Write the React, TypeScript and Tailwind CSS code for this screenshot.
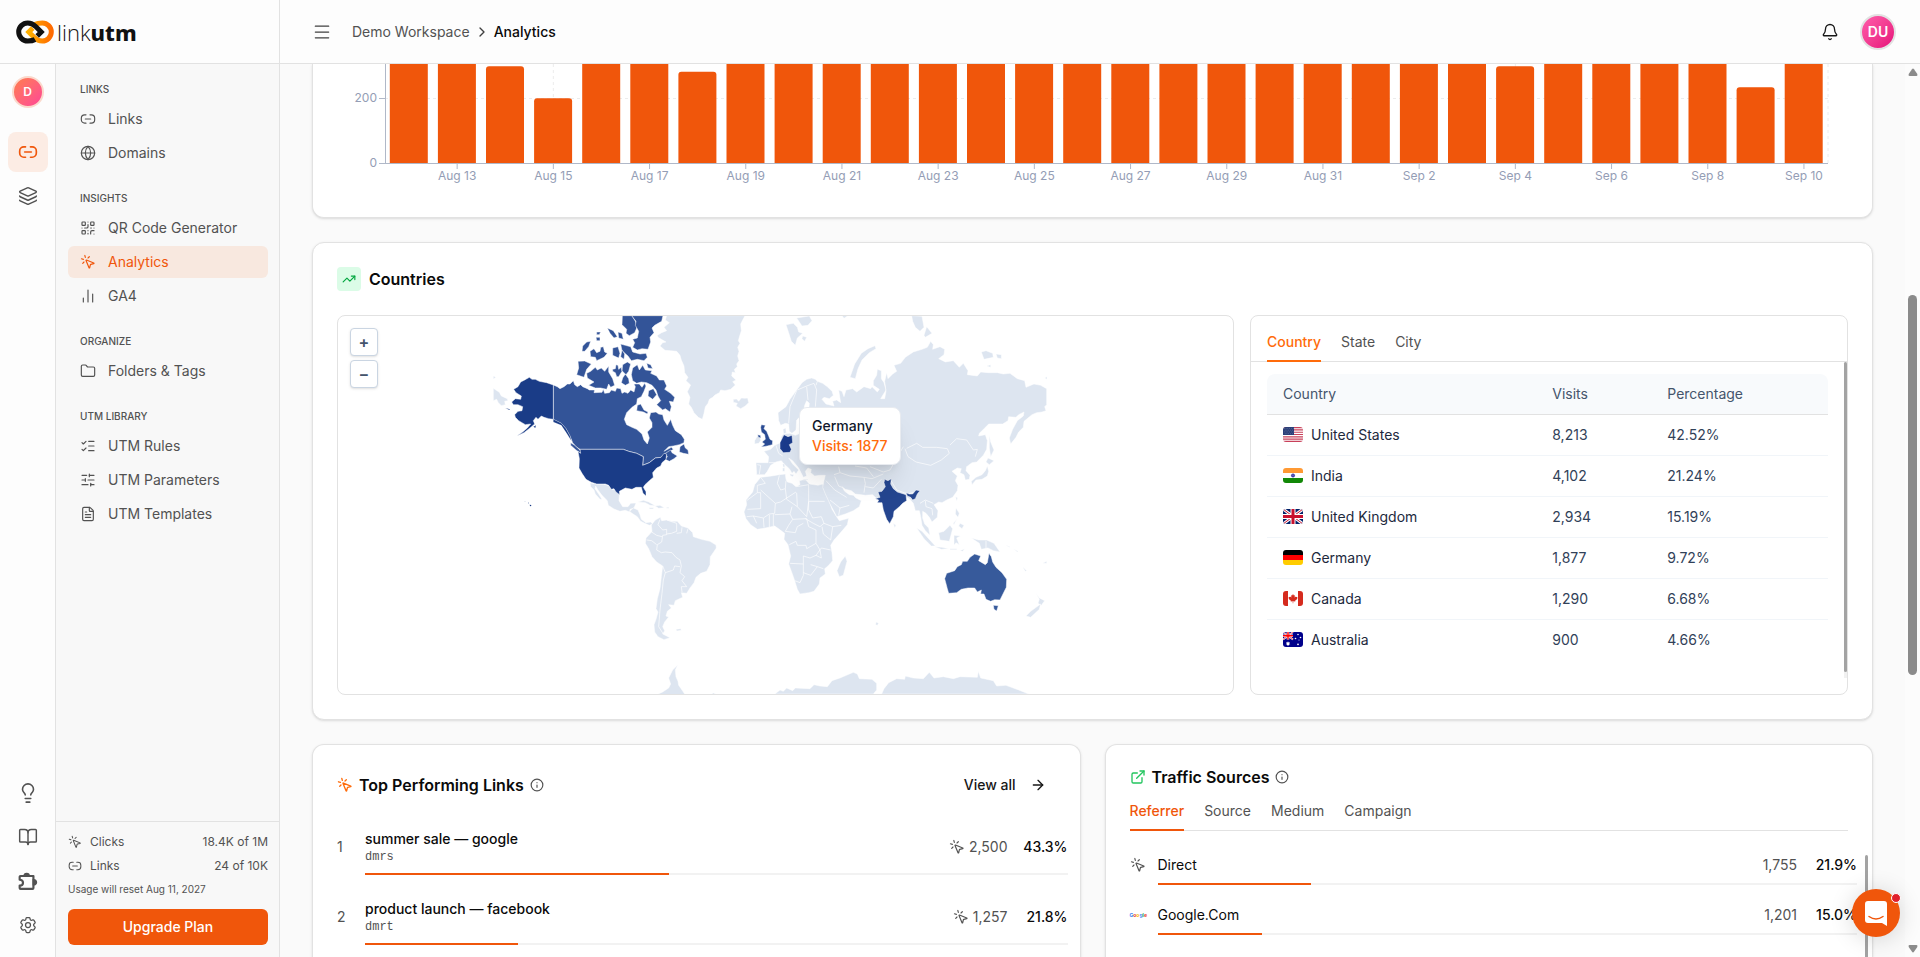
import type { ReactNode } from "react";
import {
  ArrowRight,
  Bell,
  BookOpen,
  ChartNoAxesColumn,
  ChevronRight,
  ExternalLink,
  FileText,
  Folder,
  Globe,
  Info,
  Layers,
  Lightbulb,
  ListChecks,
  Menu,
  MousePointerClick,
  QrCode,
  SlidersHorizontal,
  TrendingUp,
} from "lucide-react";
import { HiOutlineCog6Tooth } from "react-icons/hi2";

interface IconProps {
  className?: string;
  strokeWidth?: number;
}

function ChainIcon({ className, strokeWidth = 2 }: IconProps) {
  return (
    <svg
      viewBox="0 0 24 24"
      className={className}
      fill="none"
      stroke="currentColor"
      strokeWidth={strokeWidth}
      strokeLinecap="round"
      strokeLinejoin="round"
      aria-hidden="true"
    >
      <path d="M9 5.75H7a5 5 0 0 0-5 5v2.5a5 5 0 0 0 5 5h2M15 5.75h2a5 5 0 0 1 5 5v2.5a5 5 0 0 1-5 5h-2M8 12h8" />
    </svg>
  );
}

function PuzzleIcon({ className }: IconProps) {
  return (
    <svg viewBox="0 0 24 24" className={className} aria-hidden="true">
      <path
        d="M3 6h15.500v14.500a1 1 0 0 1-1 1H3a1 1 0 0 1-1-1V17.500c2.500 0 4-1.300 4-3.500s-1.500-3.500-4-3.500V7a1 1 0 0 1 1-1Z"
        fill="none"
        stroke="currentColor"
        strokeWidth="2.600"
        strokeLinejoin="round"
      />
      <path
        d="M6.500 6a3.900 3.900 0 0 1 7.800 0v1h-7.800ZM18.500 9.500a4 4 0 0 1 4.500 4 4 4 0 0 1-4.500 4h-1v-8Z"
        fill="currentColor"
      />
    </svg>
  );
}

function Logo() {
  return (
    <a href="#home" className="flex items-center gap-[3px]" aria-label="linkutm home">
      <svg viewBox="0 0 38 24" className="h-6 w-[38px]" fill="none" strokeWidth="5" aria-hidden="true">
        <defs>
          <linearGradient id="logo-ring" x1="0" x2="1" y1="0" y2="0">
            <stop offset="0" stopColor="#ffb000" />
            <stop offset="1" stopColor="#ff6b00" />
          </linearGradient>
        </defs>
        <path
          d="M19 4.500C21.500 3 23.500 3 26.300 3a9 9 0 0 1 0 18c-4 0-5.500-1-8-3.500L12.800 12l4-4"
          stroke="url(#logo-ring)"
        />
        <path
          d="M19 19.500C16.500 21 14.500 21 11.700 21a9 9 0 0 1 0-18c4 0 5.500 1 8 3.500l5.500 5.500-4 4"
          stroke="#111"
        />
      </svg>
      <span className="font-['Open_Sans','Noto_Sans',sans-serif] text-[22px] leading-6 text-[#111]">
        <span className="font-light">link</span>
        <span className="font-['Noto_Sans',sans-serif] font-extrabold">utm</span>
      </span>
    </a>
  );
}

const navGroups = [
  {
    label: "LINKS",
    items: [
      { name: "Links", Icon: ChainIcon },
      { name: "Domains", Icon: Globe },
    ],
  },
  {
    label: "INSIGHTS",
    items: [
      { name: "QR Code Generator", Icon: QrCode },
      { name: "Analytics", Icon: MousePointerClick, active: true },
      { name: "GA4", Icon: ChartNoAxesColumn },
    ],
  },
  { label: "ORGANIZE", items: [{ name: "Folders & Tags", Icon: Folder }] },
  {
    label: "UTM LIBRARY",
    items: [
      { name: "UTM Rules", Icon: ListChecks },
      { name: "UTM Parameters", Icon: SlidersHorizontal },
      { name: "UTM Templates", Icon: FileText },
    ],
  },
];

function RailButton({ label, active, children }: { label: string; active?: boolean; children: ReactNode }) {
  return (
    <button
      type="button"
      aria-label={label}
      className={
        active
          ? "flex size-10 items-center justify-center rounded-lg bg-[#fcece4] text-[#f0560b]"
          : "flex size-10 items-center justify-center rounded-lg text-[#525252]"
      }
    >
      {children}
    </button>
  );
}

function Rail() {
  return (
    <div className="flex w-14 shrink-0 flex-col items-center border-r border-[#e2e2e2] bg-[#fdfdfd] py-3">
      <button
        type="button"
        aria-label="Workspace"
        className="mb-6 flex size-8 items-center justify-center rounded-full border-2 border-[#fbd9cc] bg-linear-to-br from-[#ff8040] to-[#ff3d9a] bg-origin-border text-xs font-semibold text-white"
      >
        D
      </button>
      <div className="flex flex-col gap-1">
        <RailButton label="Links" active>
          <ChainIcon className="size-5" />
        </RailButton>
        <RailButton label="Collections">
          <Layers className="size-5" strokeWidth={1.75} />
        </RailButton>
      </div>
      <div className="mt-auto flex flex-col gap-1">
        <RailButton label="Tips">
          <Lightbulb className="size-[22px]" strokeWidth={1.75} />
        </RailButton>
        <RailButton label="Docs">
          <BookOpen className="size-5" strokeWidth={1.75} />
        </RailButton>
        <RailButton label="Integrations">
          <PuzzleIcon className="size-5" />
        </RailButton>
        <RailButton label="Settings">
          <HiOutlineCog6Tooth className="size-5" />
        </RailButton>
      </div>
    </div>
  );
}

function Sidebar() {
  return (
    <aside className="flex w-56 shrink-0 flex-col border-r border-[#e2e2e2] bg-[#f8f8f8]">
      <nav className="flex flex-1 flex-col gap-4 pt-3 pr-[11px] pl-3">
        {navGroups.map((group) => (
          <div key={group.label}>
            <h2 className="flex h-[27px] items-center px-3 text-[10px] font-medium text-[#525252]">{group.label}</h2>
            <ul className="flex flex-col gap-0.5">
              {group.items.map(({ name, Icon, active }: any) => (
                <li key={name}>
                  <a
                    href={"#" + name}
                    className={
                      active
                        ? "flex h-8 items-center gap-3 rounded-md bg-[#f8e8df] px-3 text-sm text-[#f0560b]"
                        : "flex h-8 items-center gap-3 rounded-md px-3 text-sm text-[#525252]"
                    }
                  >
                    <Icon className="size-4" strokeWidth={1.75} />
                    {name}
                  </a>
                </li>
              ))}
            </ul>
          </div>
        ))}
      </nav>
      <div className="flex flex-col border-t border-[#e2e2e2] pt-2 pr-[11px] pb-3 pl-3 text-xs text-[#525252]">
        <div className="flex h-6 items-center gap-2">
          <MousePointerClick className="size-3.5" strokeWidth={1.75} />
          Clicks
          <span className="ml-auto">18.4K of 1M</span>
        </div>
        <div className="flex h-6 items-center gap-2">
          <ChainIcon className="size-3.5" strokeWidth={1.75} />
          Links
          <span className="ml-auto">24 of 10K</span>
        </div>
        <p className="mt-1 text-[10px] leading-[15px]">Usage will reset Aug 11, 2027</p>
        <button type="button" className="mt-3 h-9 rounded-md bg-[#f0560b] text-sm font-medium text-white">
          Upgrade Plan
        </button>
      </div>
    </aside>
  );
}

// Daily clicks; anything above 300 runs off the top of the scrolled card.
const days = Array.from({ length: 30 }, (_, i) => (i < 20 ? `Aug ${i + 12}` : `Sep ${i - 19}`));
const clicks: Record<number, number> = { 2: 300, 3: 201, 6: 283, 23: 300, 28: 235 };

function ClicksChart() {
  const left = 72;
  const right = 1515;
  const base = 99;
  const step = (right - left) / days.length;
  const centre = (i: number) => left + step * (i + 0.5);
  return (
    <svg viewBox="0 0 1559 153" className="block w-full" role="img" aria-label="Clicks per day">
      <g stroke="#ececec" strokeDasharray="3 3">
        <line x1={left} x2={right} y1={34.5} y2={34.5} />
        <line x1={right} x2={right} y1={0} y2={base} />
        {days.map((day, i) => (i % 2 ? <line key={day} x1={centre(i)} x2={centre(i)} y1={0} y2={base} /> : null))}
      </g>
      {days.map((day, i) => {
        const y = base - (clicks[i] ?? 400) * 0.3225;
        return (
          <path
            key={day}
            fill="#f0560b"
            d={`M${left + 4.8 + step * i} ${base}V${y + 3}q0-3 3-3h32q3 0 3 3V${base}Z`}
          />
        );
      })}
      <g stroke="#b0b8c8">
        <line x1={left + 0.5} x2={left + 0.5} y1={0} y2={base} />
        <line x1={left - 6} x2={right} y1={base + 0.5} y2={base + 0.5} />
        <line x1={left - 6} x2={left} y1={34.5} y2={34.5} />
        {days.map((day, i) => (i % 2 ? <line key={day} x1={centre(i)} x2={centre(i)} y1={base} y2={base + 6} /> : null))}
      </g>
      <g fill="#949db5" fontSize="12">
        <text x={left - 8} y={38} textAnchor="end">
          200
        </text>
        <text x={left - 8} y={103} textAnchor="end">
          0
        </text>
        {days.map((day, i) =>
          i % 2 ? (
            <text key={day} x={centre(i)} y={116} textAnchor="middle">
              {day}
            </text>
          ) : null,
        )}
      </g>
    </svg>
  );
}

function WorldMap() {
  return (
    <svg viewBox="0 0 895 378" className="block h-full w-full" role="img" aria-label="Visits by country">
      <g stroke="#fff" strokeWidth="1.5" strokeLinejoin="round">
        {/* western half */}
        <g transform="translate(142 -6) scale(.33333)">
          <g fill="#dde5f0">
            <path d="M560 17H795L788 30 782 42 784 62 779 78 775 92 780 100 773 112 777 124 773 138 777 152 770 162 772 170 763 178 766 188 757 186 755 198 768 210 758 215 766 225 752 238 735 242 722 240 718 248 705 255 698 262 688 268 684 280 676 290 672 310 667 328 655 322 642 308 634 292 626 282 630 262 622 245 632 225 618 212 624 202 614 188 612 168 604 150 600 136 590 124 572 122 555 121 540 108 548 98 558 96 534 82 532 76 545 68 560 62 552 52 568 38 556 30Z" />
            <path d="M760 268 770 267 776 274 784 264 796 265 803 264 806 278 796 288 782 296 768 288 772 280 760 277Z" />
            <path d="M40 235 58 247 64 258 82 266 84 272 74 274 76 284 64 287 55 278 50 268 40 272ZM40 198l8 4-8 5Z" />
            <path d="M330 519 350 522 370 522 388 528 395 538 408 540 418 553 417 572 428 590 444 590 452 580 468 579 462 594 450 598 449 606 436 601 420 604 402 597 385 586 382 572 366 556 354 540 347 528 345 536 356 552 366 568 360 568 346 552 342 540 332 530Z" />
            <path d="M449 604 460 594 474 600 480 614 484 628 498 638 512 636 518 642 508 646 494 640 482 634 472 620 456 610ZM474 576 490 571 506 576 526 587 510 586 496 578ZM525 588 540 586 553 593 536 595ZM508 593h12v4h-12ZM560 592h7v3h-7Z" />
            <path d="M514 645 526 630 541 622 545 632 560 630 576 634 592 634 604 648 624 654 638 668 640 680 664 688 690 694 708 705 709 714 697 732 691 740 690 764 680 784 662 790 648 802 642 818 630 834 620 850 604 848 608 862 586 872 582 886 566 884 574 894 562 904 558 918 566 921 554 936 548 950 554 962 548 972 570 983 552 989 534 980 524 966 522 944 528 928 534 906 528 896 532 866 540 836 544 800 548 768 530 756 516 740 506 716 496 700 498 684 506 676 516 664Z" />
            <path d="M588 958l14-2 2 5-14 2ZM593 1065 586 1080 588 1100 594 1114 596 1126 606 1140 616 1155H528L548 1146 566 1134 572 1122 566 1104 578 1080ZM690 1155l10-6 14 6Z" />
          </g>
          <g fill="none" strokeWidth="2">
            <path d="M540 628 534 644 548 660 560 658 560 674 548 676 545 696 532 704 530 720 544 728 556 726 576 728 588 742 600 750 604 768 600 788 614 800 606 812 620 830 604 830 606 846M548 768 556 788 580 780 584 768 600 770M556 788 550 810 546 850 540 900 536 950 550 972M560 630 590 640 590 664 574 670 560 672M606 652 604 668 590 670M624 656 620 670M500 690 515 692 530 704M512 664 530 676 546 680" />
          </g>
          <g fill="#335498">
            <path d="M220 225 232 230 240 236 252 230 262 222 270 222 280 212 284 224 292 230 302 224 308 230 322 236 328 240 344 240 342 248 366 247 370 238 374 250 388 248 394 240 406 244 410 234 422 236 426 250 434 246 444 250 452 240 462 246 466 230 462 222 478 222 486 232 494 220 498 228 492 244 484 260 472 266 470 282 456 292 440 308 433 328 440 344 456 352 470 358 486 372 492 390 502 402 508 384 502 366 516 352 516 338 508 324 512 308 528 306 536 312 548 314 552 330 562 346 572 328 578 346 586 362 604 374 613 388 612 398 598 404 580 408 566 410 552 424 574 412 580 418 560 430 543 442 526 444 508 458 488 466 490 440 470 430 446 424 430 418H300L288 410 278 398 270 378 258 356 244 340 224 330 220 328Z" />
            <path d="M556 430 572 420 576 428 592 438 582 446 568 454 556 448 562 440ZM598 426 600 410 612 402 616 414 624 420 626 433 610 430ZM272 398l12 8 20 18-2 6-14-10-16-14Z" />
            <path d="M458 174 472 164 478 180 488 166 496 180 516 182 512 190 530 198 538 210 552 210 560 228 554 238 572 250 584 262 580 276 568 274 574 290 570 306 556 296 548 300 530 284 542 272 534 258 528 240 516 226 500 218 484 216 470 220 458 212 454 194ZM506 242l14-6 10 18-12 14-14-10Z" />
            <path d="M427 17H456L466 34 472 50 464 68 448 77 438 70 440 58 426 44Z" />
            <path d="M455 17H549L545 34 524 46 516 54 522 68 510 82 512 96 504 118 486 116 472 120 458 112 464 98 458 88 472 84 476 64 466 46 468 34Z" />
            <path d="M422 102 436 106 452 110 458 126 480 132 498 130 502 142 492 152 472 148 454 152 444 138 426 122ZM330 124 342 116 350 128 360 124 362 112 370 110 374 126 382 130 372 142 350 152 346 142 332 140ZM306 124 308 108 320 96 332 94 326 110 314 124ZM294 154 314 153 334 162 320 178 312 202 290 194 296 174ZM332 184 346 172 352 180 364 174 374 184 386 168 386 186 398 206 404 226 392 232 386 222 380 238 362 234 346 234 326 226 342 216 322 204 320 190Z" />
            <path d="M382 54 400 62 412 80 402 84 390 70ZM414 66l12 4 4 18-14-4ZM398 114l16-4 6 20-4 14-18-8ZM426 120l8 12-2 16-10-8ZM350 66l12 0-4 8-8 0ZM348 82l12 0 0 10-10 0ZM428 164l14-8 10 6-6 22-8 10-12-12ZM398 178l8-2 2-12 6 2 2 12 8-6 2 12-10 16-6 0-4-12-8-4ZM428 204l8-12 10 14 2 14-12 6-12-8ZM472 286l10-4 10 18 12 6-2 6-12-6-20-4ZM500 160l12 4 6 12-14-2Z" />
          </g>
          <g fill="#1a3c87">
            <path d="M148 202 156 208 166 208 178 214 200 218 220 225V328L206 326 192 322 184 318 174 328 168 322 160 332 164 342 150 354 132 368 110 378 128 366 142 354 152 342 136 344 126 338 116 332 106 322 104 314 114 304 126 302 128 290 114 284 100 284 95 276 106 266 122 268 124 258 108 248 101 238 114 230 122 216 134 210Z" />
            <path d="M300 418H430L446 424 470 430 490 440 488 466 508 458 526 444 543 442 552 430 560 432 558 448 546 458 542 468 530 474 518 488 520 502 508 512 495 524 490 532 498 545 498 558 489 550 484 532 468 532 456 538 436 534 418 544 419 554 408 546 402 536 394 538 386 526 376 522 350 522 334 517 318 508 306 490 297 474 298 446 294 424 302 430Z" />
            <path d="M220 328l24 12 14 16 12 22 4 14-14-22-16-24-24-10ZM160 350l8-4-2 8ZM76 294l14 4-2 2Z" strokeWidth="0.5" />
            <path d="M149 584l5 1-1 4-3-1ZM134 573h2v1h-2ZM144 578h3v2h-3Z" stroke="none" />
          </g>
        </g>
        {/* eastern half */}
        <g transform="translate(402 -6) scale(.33333)">
          <g fill="#dde5f0">
            <path d="M95 498 118 494 136 492 138 508 142 516 156 520 168 530 180 524 178 512 196 508 208 522 234 526 248 522 254 542 268 572 276 598 290 620 298 632 326 625 322 644 300 670 282 690 272 706 276 728 278 752 264 768 254 776 256 792 240 804 238 822 222 844 206 848 180 852 172 838 160 800 146 762 152 738 144 704 132 688 134 670 118 658 104 648 76 654 52 658 32 644 18 626 12 606 20 584 18 570 38 546 44 524 62 502Z" />
            <path d="M316 738 321 754 310 796 298 800 291 782 302 756Z" />
            <path d="M215 204 226 208 232 214 248 220 262 230 276 244 280 256 268 266 252 262 246 268 258 282 282 288 278 274 290 270 302 278 296 240 306 244 312 260 318 240 338 236 350 246 372 230 392 236 396 230 412 246 418 238 400 226 400 212 410 196 412 178 424 182 424 206 432 218 438 240 422 266 434 266 438 244 434 214 440 188 444 206 458 192 470 184 462 166 482 160 496 142 520 126 546 118 562 112 572 94 580 104 578 118 600 110 614 118 612 134 596 146 616 156 640 152 658 172 670 160 684 182 682 194 712 198 722 186 744 188 772 188 790 192 810 190 832 206 854 212 858 232 882 222 902 226 920 236V284L914 290 918 302 906 306 890 308 876 314 852 334 850 352 836 366 828 382 812 402 808 384 818 358 832 332 850 318 852 306 836 314 828 322 806 320 804 332 788 342 746 342 732 356 718 370 716 378 736 374 742 392 740 418 730 436 710 456 696 458 680 470 678 482 690 496 688 508 676 510 672 494 660 488 664 476 652 474 636 484 652 498 646 512 654 526 652 542 638 562 620 570 606 578 596 576 582 584 594 602 592 622 576 636 568 622 558 610 548 604 548 624 554 642 566 654 570 676 556 662 546 646 542 620 538 602 526 602 520 580 508 566 498 560 480 590 440 590 424 574 410 566 398 554 376 556 346 552 334 542 316 538 306 530 314 544 328 554 340 556 348 564 364 572 358 590 340 602 316 612 290 620 282 604 270 582 256 552 248 532 252 512 256 496 240 496 224 498 212 488 214 478 204 474 196 484 200 498 190 502 184 490 176 474 158 452 146 444 158 462 176 480 168 492 162 484 156 490 148 476 132 462 124 452 108 456 92 466 82 484 74 494 50 494 48 458 84 458 86 440 72 424 92 418 104 406 122 398 124 380 130 372 150 370 166 376 190 366 210 366 220 340 234 312 220 310 206 300 208 280 200 272 194 286 190 310 170 330 168 360 156 370 148 364 146 342 136 340 122 346 116 332 114 308 138 290 150 268 170 240 186 218 200 208Z" />
            <path d="M129 358l8-4 2 14-8 4ZM128 462h6v10h-4ZM128 474h6v10h-6ZM150 492l12 2-4 6-8-4ZM190 508h14v2h-14ZM44 392 52 378 62 378 62 392 56 400 44 402Z" />
            <path d="M138 44 160 40 172 52 176 66 188 70 172 84 166 106 154 94 146 68ZM170 24 208 18 216 32 204 46 186 48ZM188 78l12 4-6 12-8-8ZM306 17h18l-12 8Z" />
            <path d="M405 107 408 116 388 128 366 150 354 176 346 206 330 202 344 162 364 130 384 116ZM515 17 546 19 552 52 540 64 526 52 518 34ZM560 50 576 70 556 82 552 76ZM724 126 738 122 758 130 760 142 732 148ZM768 132 784 134 784 146 772 144ZM740 168l12-4 0 8ZM914 204l7-4v8Z" />
            <path d="M748 375 752 396 762 420 752 440 748 414ZM738 456 744 444 762 452 748 464ZM742 468 746 484 742 498 726 508 708 510 696 524 694 514 708 502 726 494 736 482ZM647 560l6 4-3 10ZM530 654 546 664 566 686 586 708 574 708 552 686ZM584 710 606 712 626 716 604 718ZM596 668 612 664 630 646 638 656 628 694 600 690ZM642 676 662 678 650 684 658 704 648 698 642 706ZM694 684 716 690 740 690 762 700 780 726 760 722 744 714 724 718 718 700ZM648 594 658 610 654 622 646 612ZM660 640 672 646 666 656 656 648ZM640 640l10-12-8 16ZM630 716h20v3h-20ZM660 722l14-6-6 8Z" />
            <path d="M888 850 898 864 914 872 904 886 894 880 898 868ZM902 882 898 898 872 922 858 918 872 904ZM460 640l8 6-4 8ZM408 936l8 4-4 6-5-2ZM848 770l12 12-4 2ZM908 760l12-6v6ZM796 704l14 6-2 2ZM820 716l14 8-2 2Z" />
            <path d="M105 1152 120 1140 130 1144 140 1134 158 1142 166 1134 210 1136 222 1124 240 1128 262 1130 276 1112 300 1104 340 1087 352 1092 358 1106 396 1108 410 1120 410 1140 400 1152ZM425 1152 432 1136 446 1118 470 1106 494 1108 496 1098 520 1104 550 1106 568 1087 582 1104 610 1100 640 1106 660 1100 712 1102 715 1084 722 1104 760 1112 770 1128 798 1126 836 1140 866 1152Z" />
          </g>
          <path
            d="M62 502 76 520 52 526 52 548 20 572M52 548H62V596L22 598M62 540 106 580 122 576 168 546M118 496 112 520 122 540 136 536M136 536 138 512M136 536 140 568 172 590 170 548M170 530 206 524V574H254M206 574 200 620 172 590M206 574V600L218 624 244 620 252 640 240 650 220 640 196 626M106 580 104 610 88 612 70 624M104 614 150 612 156 590M150 612 158 628 146 646 136 664M158 628 200 626M200 626 206 650 228 660 228 700 200 716 198 706 172 706 168 694 148 704M136 664 166 668 172 650 190 640M252 640 278 650 304 646M278 650 272 690 250 672 246 650M150 760 190 762 190 738 210 744 228 736 244 744 240 720 228 700M190 762V796L180 818 164 812M190 788 212 796 232 770 250 776M212 764 232 770M228 736 244 714 272 720M20 620 40 618 50 640M40 618 70 624 72 652M88 614V652M100 612V648M258 512 284 540 320 562M284 500 296 528 306 532M270 570 300 594 328 586M300 594 296 616M282 494 300 488 296 470M300 488 330 498 372 502 376 520 372 548M372 502 396 506 430 492M376 530 400 534 424 508M345 468 380 474 400 500M390 470 430 486M500 415 530 400 548 412 590 412 622 416 628 430 604 450 572 466 528 456 504 440 495 416M630 405 650 386 680 390 700 420 712 418 706 440M430 486 450 480 490 410M452 510 470 540 502 552 540 542M540 580 556 570 580 580M556 572 558 590 576 596 578 616M172 240 200 228M200 228 222 220 230 240 226 290M200 230 204 270M170 242 150 290 146 340M232 214 228 226M108 406 116 430 128 438M86 458 106 458M52 464 62 466 58 492M680 470 690 480M738 692V718"
            fill="none"
            strokeWidth="2"
          />
          <path
            fill="#24458f"
            d="M434 508 444 512 454 506 452 522 460 536 472 546 498 554 500 572 488 580 478 590 462 604 460 620 449 641 440 628 430 600 426 578 412 578 416 570 406 566 420 562 414 546 426 544 436 530 432 518ZM498 548l10 4 10 0 10-12 12 2-8 10-6 14-8 4-6-8-10-4Z"
          />
          <path
            fill="#2a4b93"
            d="M64 344 76 346 72 356 80 364 86 378 90 388 98 392 97 404 82 408 64 411 74 402 66 396 76 388 74 374 64 366 62 352ZM53 374l8 2 2 8-8-2Z"
          />
          <path fill="#1b3b8b" d="M128 382 132 374 144 380 156 376 158 398 148 404 154 418 150 427 130 428 120 416 120 398Z" />
          <path
            fill="#375a9b"
            d="M614 806 620 790 644 782 652 770 664 764 668 754 682 754 690 742 704 732 722 738 716 752 736 764 742 758 747 730 754 740 758 756 768 772 786 788 800 808 799 832 786 858 780 870 764 869 752 874 738 868 732 852 722 852 724 840 712 846 704 834 684 834 664 838 650 848 626 850 622 836ZM760 886 775 887 770 903 762 898Z"
          />
        </g>
      </g>
    </svg>
  );
}

// 4x3 flags on a 20x15 grid
const flags: Record<string, ReactNode> = {
  us: (
    <>
      <path fill="#fff" d="M0 0h20v15H0z" />
      <path stroke="#c8405a" strokeWidth="1.150" d="M0 .6h20M0 2.900h20M0 5.200h20M0 7.500h20M0 9.800h20M0 12.100h20M0 14.400h20" />
      <path fill="#2b3f78" d="M0 0h11v8H0z" />
      <path stroke="#aab3cf" strokeWidth=".5" strokeDasharray=".5 1.300" d="M1 1.500h9.500M1.900 3.200h8.500M1 4.900h9.500M1.900 6.600h8.500" />
    </>
  ),
  in: (
    <>
      <path fill="#f93" d="M0 0h20v5H0z" />
      <path fill="#fff" d="M0 5h20v5H0z" />
      <path fill="#128807" d="M0 10h20v5H0z" />
      <circle cx="10" cy="7.500" r="1.600" fill="#5a5ab8" stroke="#008" strokeWidth=".6" />
    </>
  ),
  gb: (
    <>
      <path fill="#012169" d="M0 0h20v15H0z" />
      <path stroke="#fff" strokeWidth="3" d="m0 0 20 15M20 0 0 15" />
      <path stroke="#c8102e" strokeWidth="1" d="m0 0 20 15M20 0 0 15" />
      <path stroke="#fff" strokeWidth="5" d="M10 0v15M0 7.500h20" />
      <path stroke="#c8102e" strokeWidth="3" d="M10 0v15M0 7.500h20" />
    </>
  ),
  de: (
    <>
      <path d="M0 0h20v5H0z" />
      <path fill="red" d="M0 5h20v5H0z" />
      <path fill="#fc0" d="M0 10h20v5H0z" />
    </>
  ),
  ca: (
    <>
      <path fill="#fff" d="M0 0h20v15H0z" />
      <path
        fill="#d52b1e"
        d="M0 0h5v15H0zM15 0h5v15h-5zM10 3l.9 1.600 1-.4-.3 2.200 1.400-1 .2.700 1.300-.1-.5 1.300.5.400-2.400 2 .2.900-2.100-.3.100 1.900h-.6l.1-1.900-2.100.3.200-.9-2.400-2 .5-.4-.5-1.300 1.300.1.200-.7 1.400 1-.3-2.200 1 .4z"
      />
    </>
  ),
  au: (
    <>
      <path fill="#00008b" d="M0 0h20v15H0z" />
      <path stroke="#fff" strokeWidth="1.600" d="m0 0 10 7.500M10 0 0 7.500" />
      <path stroke="#fff" strokeWidth="2.600" d="M5 0v7.500M0 3.750h10" />
      <path stroke="red" strokeWidth="1.400" d="M5 0v7.500M0 3.750h10" />
      <path stroke="red" strokeWidth=".6" d="m0 0 10 7.500M10 0 0 7.500" />
      <g fill="#fff">
        <path d="m5 9.300.6 1.200 1.300-.3-.6 1.200 1 .8-1.300.3V13.800L5 13l-1 .8v-1.300l-1.300-.3 1-.8-.6-1.200 1.300.3z" />
        <circle cx="15" cy="2.500" r=".8" />
        <circle cx="12.500" cy="6.500" r=".8" />
        <circle cx="17.500" cy="5.500" r=".8" />
        <circle cx="15" cy="12.300" r=".9" />
        <circle cx="16" cy="8" r=".5" />
      </g>
    </>
  ),
};

const countries = [
  { code: "us", name: "United States", visits: "8,213", share: "42.52%" },
  { code: "in", name: "India", visits: "4,102", share: "21.24%" },
  { code: "gb", name: "United Kingdom", visits: "2,934", share: "15.19%" },
  { code: "de", name: "Germany", visits: "1,877", share: "9.72%" },
  { code: "ca", name: "Canada", visits: "1,290", share: "6.68%" },
  { code: "au", name: "Australia", visits: "900", share: "4.66%" },
];

function CountriesCard() {
  return (
    <section className="rounded-xl border border-[#e2e2e2] bg-white p-6 shadow-sm">
      <div className="mb-6 flex h-6 items-center gap-2">
        <span className="flex size-6 items-center justify-center rounded bg-green-100 text-green-600">
          <TrendingUp className="size-3.5" />
        </span>
        <h2 className="text-base font-semibold text-[#0a0a0a]">Countries</h2>
      </div>
      <div className="grid grid-cols-[3fr_2fr] gap-4">
        <div className="relative h-[380px] overflow-hidden rounded-lg border border-[#e2e2e2]">
          <WorldMap />
          <div className="absolute top-3 left-3 flex flex-col gap-1">
            <button
              type="button"
              aria-label="Zoom in"
              className="size-7 rounded border border-slate-300 bg-white text-base leading-6 font-semibold text-slate-600 shadow-sm"
            >
              +
            </button>
            <button
              type="button"
              aria-label="Zoom out"
              className="size-7 rounded border border-slate-300 bg-white text-base leading-6 font-semibold text-slate-600 shadow-sm"
            >
              −
            </button>
          </div>
          <div
            role="tooltip"
            className="absolute top-[91px] left-[461px] rounded-lg border border-[#e8ebf0] bg-white px-3 py-2 text-sm font-medium shadow-xl"
          >
            <p className="text-slate-900">Germany</p>
            <p className="text-[#ff6b0a]">Visits: 1877</p>
          </div>
        </div>
        <div className="flex h-[380px] flex-col overflow-hidden rounded-lg border border-[#e2e2e2] pb-4">
          <div className="flex h-[46px] shrink-0 items-end gap-5 border-b border-[#e2e2e2] px-4 text-sm" role="tablist">
            <button
              role="tab"
              aria-selected="true"
              className="-mb-px h-9 border-b-2 border-[#ff6b0a] pb-0.5 font-medium text-[#ff6b0a]"
            >
              Country
            </button>
            {["State", "City"].map((tab) => (
              <button
                key={tab}
                role="tab"
                aria-selected="false"
                className="-mb-px h-9 border-b-2 border-transparent pb-0.5 text-[#525252]"
              >
                {tab}
              </button>
            ))}
          </div>
          <div className="flex min-h-0 flex-1">
            <div className="flex-1 overflow-hidden px-4 pt-3">
              <table className="w-full table-fixed text-left text-sm text-slate-700">
                <thead>
                  <tr className="h-10 border-b border-[#e2e2e2] text-slate-600">
                    <th className="w-[48%] rounded-tl-lg bg-[#f8fafc] px-4 font-normal">Country</th>
                    <th className="w-[115px] bg-[#f8fafc] px-4 font-normal">Visits</th>
                    <th className="rounded-tr-lg bg-[#f8fafc] px-4 font-normal">Percentage</th>
                  </tr>
                </thead>
                <tbody>
                  {countries.map((c) => (
                    <tr key={c.code} className="h-[41px] border-b border-slate-100 last:border-0">
                      <td className="px-4">
                        <span className="flex items-center gap-2 text-slate-800">
                          <svg viewBox="0 0 20 15" className="h-[15px] w-5 rounded-[3px]" aria-hidden="true">
                            {flags[c.code]}
                          </svg>
                          {c.name}
                        </span>
                      </td>
                      <td className="px-4">{c.visits}</td>
                      <td className="px-4">{c.share}</td>
                    </tr>
                  ))}
                </tbody>
              </table>
            </div>
            <div className="w-[3px] bg-[#f1f1f1]">
              <div className="h-[98%] rounded-full bg-[#a3a3a3]" />
            </div>
          </div>
        </div>
      </div>
    </section>
  );
}

function ShareBar({ value }: { value: number }) {
  return (
    <div className="h-0.5 bg-[#f2f2f2]">
      <div className="h-full bg-[#f0560b]" style={{ width: `${value}%` }} />
    </div>
  );
}

const topLinks = [
  { name: "summer sale — google", slug: "dmrs", clicks: "2,500", share: 43.3 },
  { name: "product launch — facebook", slug: "dmrt", clicks: "1,257", share: 21.8 },
];

function TopLinksCard() {
  return (
    <section className="rounded-t-xl border border-b-0 border-[#e2e2e2] bg-white px-6 pt-6 shadow-sm">
      <div className="mb-7 flex h-8 items-center">
        <MousePointerClick className="size-4 text-[#ff6b0a]" />
        <h2 className="ml-1.5 text-base font-semibold text-[#0a0a0a]">Top Performing Links</h2>
        <Info className="ml-1.5 size-3.5 text-[#525252]" />
        <button type="button" className="ml-auto flex h-8 items-center gap-3.5 px-2.5 text-sm font-medium text-[#171717]">
          View all
          <ArrowRight className="size-4" />
        </button>
      </div>
      <ol className="-mr-3 flex flex-col gap-6">
        {topLinks.map((link, i) => (
          <li key={link.slug} className="flex gap-5">
            <span className="w-2 text-sm leading-9 text-[#525252]">{i + 1}</span>
            <div className="flex flex-1 flex-col gap-2">
              <div className="flex items-center">
                <div>
                  <p className="text-sm font-medium text-[#0a0a0a]">{link.name}</p>
                  <p className="font-['Liberation_Mono',monospace] text-xs text-[#525252]">{link.slug}</p>
                </div>
                <span className="ml-auto flex items-center gap-1 text-sm text-[#525252]">
                  <MousePointerClick className="size-4" strokeWidth={1.75} />
                  {link.clicks}
                </span>
                <span className="ml-3 w-12 text-right text-sm font-medium text-[#0a0a0a]">{link.share.toFixed(1)}%</span>
              </div>
              <ShareBar value={link.share} />
            </div>
          </li>
        ))}
      </ol>
    </section>
  );
}

const sources = [
  {
    name: "Direct",
    visits: "1,755",
    share: 21.9,
    icon: <MousePointerClick className="size-4 text-[#525252]" strokeWidth={1.75} />,
  },
  {
    name: "Google.Com",
    visits: "1,201",
    share: 15,
    icon: (
      <span className="text-[5px] leading-4 font-bold" aria-hidden="true">
        <span className="text-[#4285f4]">G</span>
        <span className="text-[#ea4335]">o</span>
        <span className="text-[#fbbc05]">o</span>
        <span className="text-[#4285f4]">g</span>
        <span className="text-[#34a853]">l</span>
        <span className="text-[#ea4335]">e</span>
      </span>
    ),
  },
];

function TrafficSourcesCard() {
  return (
    <section className="rounded-t-xl border border-b-0 border-[#e2e2e2] bg-white px-6 pt-5 shadow-sm">
      <div className="flex h-6 items-center">
        <ExternalLink className="size-4 text-[#22c55e]" />
        <h2 className="ml-1.5 text-base font-semibold text-[#0a0a0a]">Traffic Sources</h2>
        <Info className="ml-1.5 size-3.5 text-[#525252]" />
      </div>
      <div className="flex h-[42px] items-end gap-5 border-b border-[#e2e2e2] text-sm" role="tablist">
        <button
          role="tab"
          aria-selected="true"
          className="-mb-px h-9 border-b-2 border-[#f0560b] pb-0.5 font-medium text-[#f0560b]"
        >
          Referrer
        </button>
        {["Source", "Medium", "Campaign"].map((tab) => (
          <button
            key={tab}
            role="tab"
            aria-selected="false"
            className="-mb-px h-9 border-b-2 border-transparent pb-0.5 text-[#525252]"
          >
            {tab}
          </button>
        ))}
      </div>
      <div className="mt-6 -mr-5 flex">
        <ul className="flex flex-1 flex-col gap-5 pr-2 pb-6">
          {sources.map((s) => (
            <li key={s.name} className="flex gap-3">
              <span className="flex h-5 w-4 items-center">{s.icon}</span>
              <div className="flex flex-1 flex-col gap-2">
                <div className="flex items-center text-sm">
                  <span className="text-[#0a0a0a]">{s.name}</span>
                  <span className="ml-auto text-[#525252]">{s.visits}</span>
                  <span className="ml-3 w-12 text-right font-medium text-[#0a0a0a]">{s.share.toFixed(1)}%</span>
                </div>
                <ShareBar value={s.share} />
              </div>
            </li>
          ))}
        </ul>
        <div className="w-[3px] rounded-t-full bg-[#a3a3a3]" />
      </div>
    </section>
  );
}

function PageScrollbar() {
  return (
    <div className="flex w-[15px] shrink-0 flex-col items-center bg-[#fcfcfc] pt-1 pb-1" aria-hidden="true">
      <svg viewBox="0 0 10 8" className="h-2 w-2.5 fill-[#8b8b8b]">
        <path d="M4 1.200Q5 0 6 1.200L9.300 6Q10 8 8.500 8h-7Q0 8 .7 6Z" />
      </svg>
      <div className="mt-[219px] h-[380px] w-[9px] rounded-full bg-[#8b8b8b]" />
      <svg viewBox="0 0 10 8" className="mt-auto h-2 w-2.5 fill-[#8b8b8b]">
        <path d="M4 6.800Q5 8 6 6.800L9.300 2Q10 0 8.500 0h-7Q0 0 .7 2Z" />
      </svg>
    </div>
  );
}

export default function App() {
  return (
    <div className="flex h-screen flex-col overflow-hidden bg-[#fafafa] font-['Inter',sans-serif]">
      <header className="flex h-16 shrink-0 border-b border-[#e2e2e2] bg-[#fdfdfd]">
        <div className="flex w-70 shrink-0 items-center border-r border-[#e2e2e2] pl-4">
          <Logo />
        </div>
        <div className="flex flex-1 items-center pr-6 pl-8">
          <button type="button" aria-label="Toggle sidebar" className="flex w-10 text-[#404040]">
            <Menu className="size-5" strokeWidth={1.5} />
          </button>
          <nav aria-label="Breadcrumb" className="flex items-center gap-1 text-sm">
            <a href="#workspace" className="text-[#525252]">
              Demo Workspace
            </a>
            <ChevronRight className="size-4 text-[#404040]" />
            <span className="font-medium text-[#0a0a0a]">Analytics</span>
          </nav>
          <button type="button" aria-label="Notifications" className="ml-auto text-[#171717]">
            <Bell className="size-[18px]" strokeWidth={1.75} />
          </button>
          <button
            type="button"
            aria-label="Account"
            className="ml-[21px] flex size-9 items-center justify-center rounded-full border-2 border-[#e2e2e2] bg-linear-to-br from-[#ff5cab] to-[#e6007a] text-sm font-semibold text-white"
          >
            DU
          </button>
        </div>
      </header>
      <div className="flex min-h-0 flex-1">
        <Rail />
        <Sidebar />
        <main className="flex min-w-0 flex-1 flex-col gap-6 overflow-hidden px-8">
          <section className="shrink-0 rounded-b-xl border border-t-0 border-[#e2e2e2] bg-white shadow-sm">
            <ClicksChart />
          </section>
          <CountriesCard />
          <div className="grid shrink-0 grid-cols-2 gap-6">
            <TopLinksCard />
            <TrafficSourcesCard />
          </div>
        </main>
        <PageScrollbar />
      </div>
      <button
        type="button"
        aria-label="Open chat"
        className="fixed right-5 bottom-5 flex size-12 items-center justify-center rounded-full bg-[#f0560b] shadow-[0_2px_24px_rgba(0,0,0,0.16)]"
      >
        <svg viewBox="0 0 22 25" className="h-[25px] w-[22px]" aria-hidden="true">
          <path d="M3 0h16q3 0 3 3v22l-5-3H3q-3 0-3-3V3q0-3 3-3Z" fill="#fff" />
          <path d="M4 15.500q7 5 14 0" fill="none" stroke="#f0560b" strokeWidth="1.500" strokeLinecap="round" />
        </svg>
        <span className="absolute top-1 -right-px size-2.5 rounded-full border border-white bg-[#e0202b]" />
      </button>
    </div>
  );
}
